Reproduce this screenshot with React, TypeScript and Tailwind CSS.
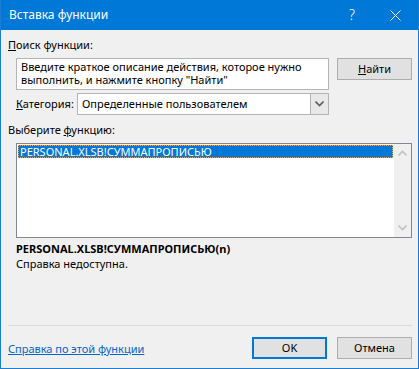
import { useState } from "react";

const ui = { fontFamily: '"Noto Sans", "Liberation Sans", sans-serif' };

const Chevron = ({ up = false }: { up?: boolean }) => (
  <svg width="9" height="6" viewBox="0 0 9 6" className="block">
    <path
      d={up ? "M0.5 5.5 L4.5 1.5 L8.5 5.5" : "M0.5 0.5 L4.5 4.5 L8.5 0.5"}
      fill="none"
      stroke="currentColor"
      strokeWidth="1.6"
    />
  </svg>
);

export default function App() {
  const [query, setQuery] = useState(
    'Введите краткое описание действия, которое нужно выполнить, и нажмите кнопку "Найти"'
  );

  return (
    <div
      className="flex h-[369px] w-[419px] flex-col border-x border-b border-[#1a7fd4] bg-[#f0f0f0] text-[11px] leading-[16px] text-black"
      style={ui}
    >
      {/* title bar */}
      <div className="flex h-[30px] shrink-0 items-center bg-[#0078d7] text-white">
        <span className="pl-[8px] text-[12px]">Вставка функции</span>
        <span className="ml-auto mr-[35px] text-[14px] font-light">?</span>
        <svg width="11" height="11" viewBox="0 0 11 11" className="mr-[17px]">
          <path d="M0.5 0.5 L10.5 10.5 M10.5 0.5 L0.5 10.5" stroke="white" strokeWidth="1" />
        </svg>
      </div>

      <div className="flex flex-1 flex-col pr-[6px] pl-[7px] pt-[7px]">
        <p>
          <span className="underline">П</span>оиск функции:
        </p>

        <div className="mt-[5px] flex gap-[8px] pl-[8px]">
          <textarea
            value={query}
            onChange={(e) => setQuery(e.target.value)}
            className="h-[32px] w-[313px] resize-none overflow-hidden border border-[#b4b4b4] bg-white px-[4px] pt-[1px] text-[11px] leading-[13px] outline-none"
            style={ui}
          />
          <button
            type="button"
            className="h-[22px] w-[75px] border border-[#adadad] bg-[#e1e1e1] text-[11px]"
          >
            <span className="underline">Н</span>айти
          </button>
        </div>

        <div className="mt-[3px] flex items-center pl-[8px]">
          <span className="w-[61px]">
            <span className="underline">К</span>атегория:
          </span>
          <div className="flex h-[22px] w-[252px] items-center border border-[#b4b4b4] bg-white">
            <span className="flex-1 pl-[4px]">Определенные пользователем</span>
            <span className="flex h-full w-[18px] items-center justify-center border-l border-[#b4b4b4] bg-[#e8e8e8] text-[#606060]">
              <Chevron />
            </span>
          </div>
        </div>

        <p className="mt-[7px]">
          Выберите <span className="underline">ф</span>ункцию:
        </p>

        <div className="mt-[5px] ml-[8px] flex h-[95px] border border-[#828790] bg-white">
          <div className="flex-1 p-[1px]">
            <div className="h-[13px] border border-dotted border-[#f0a050] bg-[#0078d7] pl-[1px] text-[11px] leading-[11px] text-white">
              PERSONAL.XLSB!СУММАПРОПИСЬЮ
            </div>
          </div>
          <div className="flex w-[17px] flex-col items-center justify-between bg-[#f0f0f0] py-[6px] text-[#c2c2c2]">
            <Chevron up />
            <Chevron />
          </div>
        </div>

        <div className="mt-[3px] pl-[8px] leading-[15px]">
          <p className="font-bold">PERSONAL.XLSB!СУММАПРОПИСЬЮ(n)</p>
          <p>Справка недоступна.</p>
        </div>

        <div className="mt-auto border-t border-[#dadada] pb-[9px] pt-[11px]">
          <div className="flex items-center">
            <a href="#" className="mt-[2px] text-[#0066cc] underline">
              Справка по этой функции
            </a>
            <button
              type="button"
              className="ml-auto h-[22px] w-[75px] border-2 border-[#0078d7] bg-[#e1e1e1] text-[11px]"
            >
              OK
            </button>
            <button
              type="button"
              className="ml-[10px] h-[22px] w-[75px] border border-[#adadad] bg-[#e1e1e1] text-[11px]"
            >
              Отмена
            </button>
          </div>
        </div>
      </div>
    </div>
  );
}
